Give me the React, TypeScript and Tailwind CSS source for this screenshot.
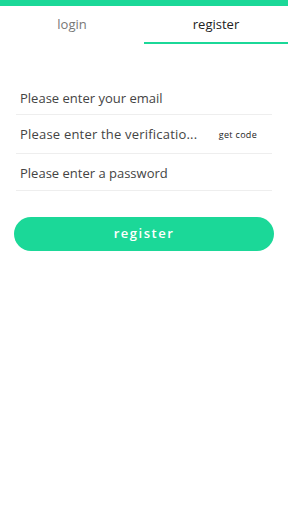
import React from 'react';

const font = { fontFamily: '"Open Sans", "Noto Sans", sans-serif' };

export default function App() {
  return (
    <div className="min-h-[512px] w-[288px] bg-white" style={font}>
      <div className="h-[6px] bg-[#1bd898]" />
      <div className="flex h-[38px] pt-[1px]">
        <div className="flex flex-1 items-center justify-center border-b-2 border-transparent text-[13px] text-[#777]">
          login
        </div>
        <div className="flex flex-1 items-center justify-center border-b-2 border-[#1bd898] text-[13px] text-[#222]">
          register
        </div>
      </div>
      <div className="mt-[35px] px-4">
        <div className="flex h-[36px] items-center border-b border-[#eee] px-1 pt-[4px] text-[13px] text-[#444]">
          Please enter your email
        </div>
        <div className="flex h-[39px] items-center justify-between border-b border-[#eee] pl-1 pr-[15px] pt-[2px]">
          <span className="text-[13px] tracking-[0.2px] text-[#444]">Please enter the verificatio...</span>
          <span className="text-[9px] tracking-[0.3px] text-[#222]">get code</span>
        </div>
        <div className="flex h-[37px] items-center border-b border-[#eee] px-1 pt-[3px] text-[13px] text-[#444]">
          Please enter a password
        </div>
      </div>
      <div className="mt-[26px] px-[14px]">
        <button className="flex h-[34px] w-full items-center justify-center rounded-full bg-[#1bd898] text-[13px] font-semibold tracking-[1.5px] text-white">
          register
        </button>
      </div>
    </div>
  );
}
